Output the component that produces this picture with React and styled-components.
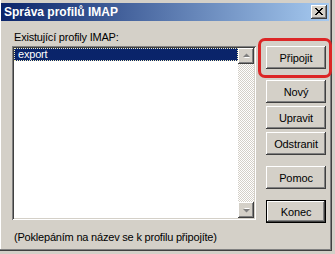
import React from 'react';
import styled, { createGlobalStyle } from 'styled-components';

const Global = createGlobalStyle`
  html, body { margin: 0; padding: 0; background: #d4d0c8; }
  body {
    width: 335px; height: 254px; overflow: hidden;
    font-family: "Liberation Sans", Arial, sans-serif;
  }
`;

const Window = styled.div`
  width: 332px;
  height: 251px;
  box-sizing: border-box;
  background: #d4d0c8;
  padding: 3px 2px 2px 1px;
  box-shadow: inset -1px -1px #404040, inset -2px -2px #808080, inset 1px 0 #ffffff;
  display: flex;
  flex-direction: column;
`;

const TitleBar = styled.div`
  height: 18px;
  flex: none;
  display: flex;
  align-items: center;
  justify-content: space-between;
  padding: 0 2px 0 3px;
  margin-right: 1px;
  background: linear-gradient(to right, #0a246a, #a6caf0);
`;

const TitleText = styled.span`
  color: #ffffff;
  font-weight: bold;
  font-size: 12px;
  line-height: 18px;
  white-space: nowrap;
`;

const Bevel = `
  background: #d4d0c8;
  box-shadow: inset -1px -1px #404040, inset 1px 1px #ffffff,
    inset -2px -2px #808080, inset 2px 2px #d4d0c8;
`;

const CloseButton = styled.div`
  ${Bevel}
  width: 16px;
  height: 14px;
  display: flex;
  align-items: center;
  justify-content: center;
  box-sizing: border-box;
  padding: 0 1px 1px 0;
`;

const Body = styled.div`
  flex: none;
  display: flex;
  gap: 10px;
  padding: 10px 0 0 11px;
`;

const LeftCol = styled.div`
  width: 244px;
  display: flex;
  flex-direction: column;
`;

const Text = styled.div`
  font-size: 11px;
  line-height: 13px;
  color: #000;
  letter-spacing: -0.2px;
  white-space: nowrap;
  padding-left: 2px;
`;

const Label = styled(Text)`
  margin-bottom: 2px;
`;

const Hint = styled(Text)`
  margin-top: 11px;
`;

const ListBox = styled.div`
  flex: none;
  height: 174px;
  box-sizing: border-box;
  background: #ffffff;
  box-shadow: inset 1px 1px #808080, inset -1px -1px #ffffff,
    inset 2px 2px #404040, inset -2px -2px #d4d0c8;
  padding: 2px;
  display: flex;
`;

const Items = styled.div`
  flex: 1;
`;

const Item = styled.div`
  height: 13px;
  box-sizing: border-box;
  background: ${p => (p.$selected ? '#0a246a' : 'transparent')};
  color: ${p => (p.$selected ? '#ffffff' : '#000000')};
  border: 1px dotted ${p => (p.$selected ? '#f4f0c0' : 'transparent')};
  font-size: 11px;
  line-height: 11px;
  padding-left: 3px;
  letter-spacing: -0.2px;
`;

const ScrollBar = styled.div`
  width: 16px;
  display: flex;
  flex-direction: column;
  background: repeating-conic-gradient(#ffffff 0 25%, #d4d0c8 0 50%) 0 0 / 2px 2px;
`;

const Track = styled.div`
  flex: 1;
`;

const ArrowButton = styled.div`
  ${Bevel}
  flex: none;
  width: 16px;
  height: 16px;
  display: flex;
  align-items: center;
  justify-content: center;
`;

const ButtonCol = styled.div`
  display: flex;
  flex-direction: column;
  padding-top: 15px;
`;

const Button = styled.div`
  ${Bevel}
  ${p => p.$default && `
    box-shadow: inset 0 0 0 1px #000000, inset -2px -2px #404040, inset 2px 2px #ffffff,
      inset -3px -3px #808080;
  `}
  flex: none;
  position: relative;
  width: 60px;
  height: 23px;
  box-sizing: border-box;
  display: flex;
  align-items: center;
  justify-content: center;
  font-size: 11px;
  letter-spacing: -0.1px;
  color: #000;
  margin-top: ${p => p.$gap || 0}px;
`;

const Highlight = styled.div`
  position: absolute;
  left: -8px;
  right: -6px;
  top: -8px;
  bottom: -9px;
  border: 3px solid #dc2626;
  border-radius: 7px;
  box-sizing: border-box;
  pointer-events: none;
`;

const Arrow = ({ up }) => (
  <svg width="9" height="6" viewBox="0 0 9 6">
    <g transform={up ? '' : 'translate(0,6) scale(1,-1)'}>
      <path d="M2 5 L8 5 L5 2 Z" fill="#ffffff" />
      <path d="M1 4 L8 4 L4.5 0.5 Z" fill="#808080" />
    </g>
  </svg>
);

const CloseGlyph = () => (
  <svg width="8" height="7" viewBox="0 0 8 7" shapeRendering="crispEdges">
    <path
      d="M0 0h2v1h-2zM6 0h2v1h-2zM1 1h2v1h-2zM5 1h2v1h-2zM2 2h4v1h-4zM3 3h2v1h-2zM2 4h4v1h-4zM1 5h2v1h-2zM5 5h2v1h-2zM0 6h2v1h-2zM6 6h2v1h-2z"
      fill="#000"
    />
  </svg>
);

export default function App() {
  return (
    <>
      <Global />
      <Window>
        <TitleBar>
          <TitleText>Správa profilů IMAP</TitleText>
          <CloseButton>
            <CloseGlyph />
          </CloseButton>
        </TitleBar>
        <Body>
          <LeftCol>
            <Label>Existující profily IMAP:</Label>
            <ListBox>
              <Items>
                <Item $selected>export</Item>
              </Items>
              <ScrollBar>
                <ArrowButton>
                  <Arrow up />
                </ArrowButton>
                <Track />
                <ArrowButton>
                  <Arrow />
                </ArrowButton>
              </ScrollBar>
            </ListBox>
            <Hint>(Poklepáním na název se k profilu připojíte)</Hint>
          </LeftCol>
          <ButtonCol>
            <Button>
              Připojit
              <Highlight />
            </Button>
            <Button $gap={11}>Nový</Button>
            <Button $gap={3}>Upravit</Button>
            <Button $gap={3}>Odstranit</Button>
            <Button $gap={11}>Pomoc</Button>
            <Button $gap={11} $default>Konec</Button>
          </ButtonCol>
        </Body>
      </Window>
    </>
  );
}
